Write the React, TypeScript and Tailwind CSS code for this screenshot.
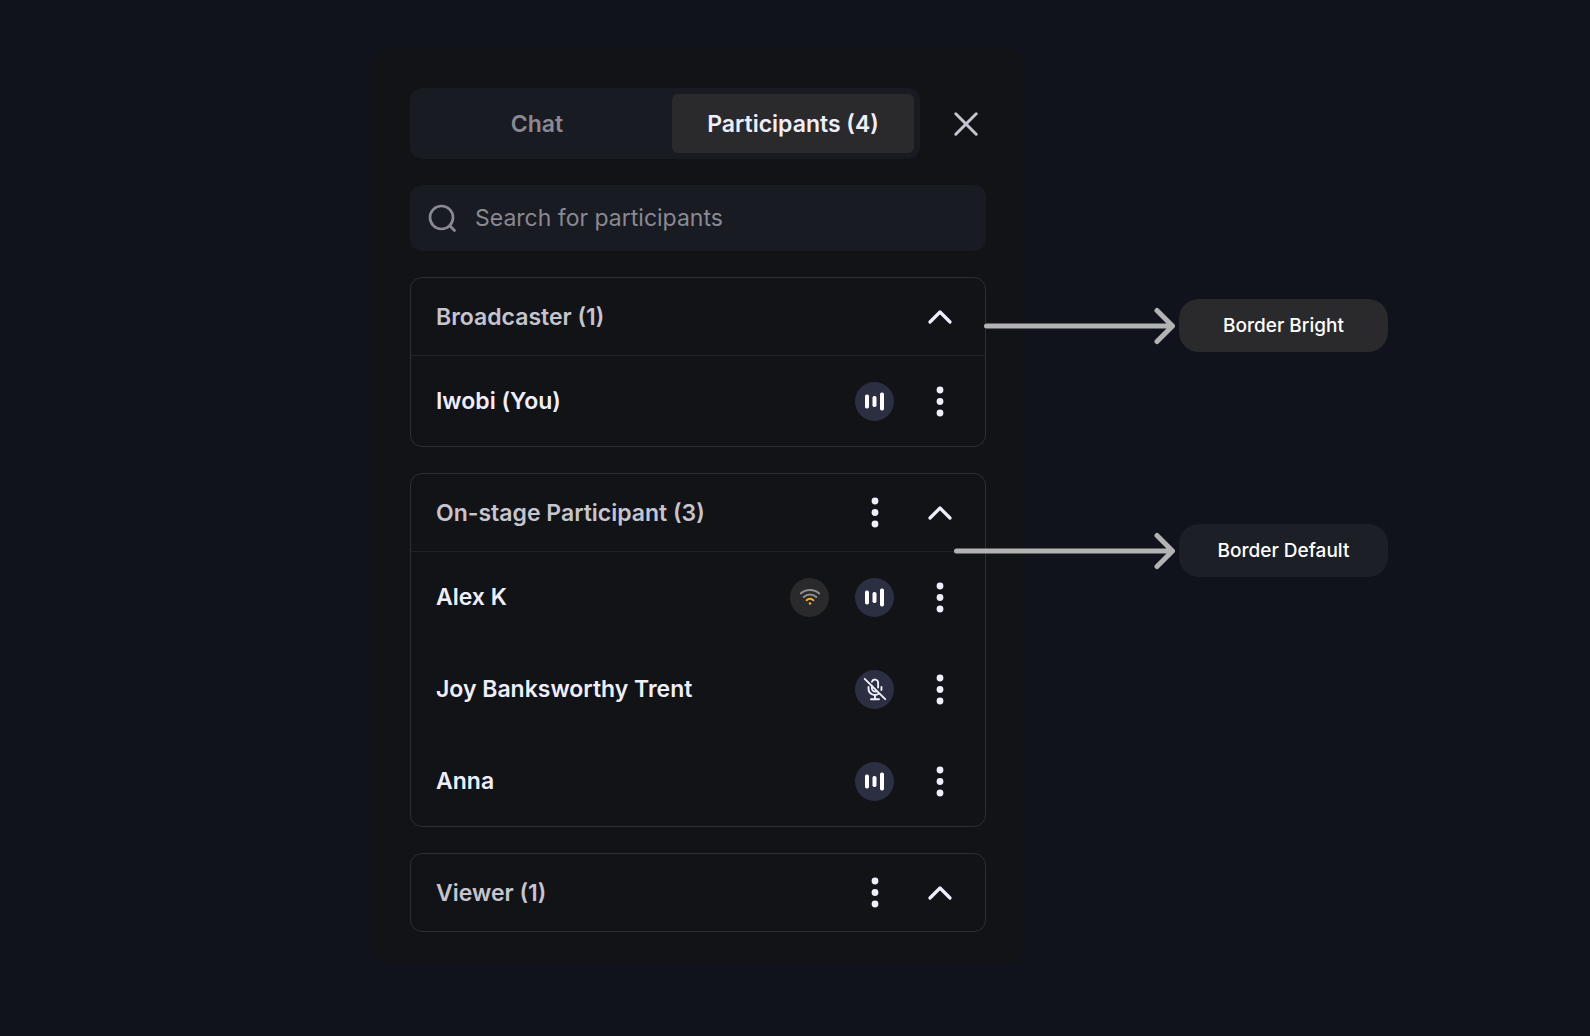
import { useState, type ReactNode } from "react";

type Status = "speaking" | "muted" | "weak-network";

function Chevron() {
  return (
    <svg width="24" height="24" viewBox="0 0 24 24" fill="none" stroke="#efeefc" strokeWidth="3.2" strokeLinecap="round" strokeLinejoin="round" aria-hidden="true">
      <path d="M2 17 12 7l10 10" />
    </svg>
  );
}

function Dots() {
  return (
    <svg width="8" height="31" viewBox="0 0 8 31" fill="#efeefc" aria-hidden="true">
      <circle cx="4" cy="4" r="3.4" />
      <circle cx="4" cy="15.5" r="3.4" />
      <circle cx="4" cy="27" r="3.4" />
    </svg>
  );
}

function StatusIcon({ status }: { status: Status }) {
  if (status === "weak-network") {
    return (
      <span role="img" aria-label="Weak network" className="grid size-[39px] place-items-center rounded-full bg-[#2a2a2d]">
        <svg width="24" height="24" viewBox="0 0 24 24" fill="none" strokeWidth="2" strokeLinecap="round">
          <path d="M2.8 8.4C8 3.8 16 3.8 21.2 8.4" stroke="#8f8f95" />
          <path d="M5.7 12C9.4 8.7 14.6 8.7 18.3 12" stroke="#8f8f95" />
          <path d="M8.6 15.2C10.6 13.5 13.4 13.5 15.4 15.2" stroke="#f8ae2b" />
          <circle cx="12" cy="18.5" r="1.2" fill="#f8ae2b" />
        </svg>
      </span>
    );
  }
  if (status === "muted") {
    return (
      <span role="img" aria-label="Muted" className="grid size-[39px] place-items-center rounded-full bg-[#2b2f41]">
        <svg width="24" height="24" viewBox="0 0 24 24" fill="none" stroke="#efeefc" strokeWidth="1.9" strokeLinecap="round" strokeLinejoin="round">
          <path d="M1.7 1.8 22.2 22.2" />
          <path d="M8.9 4.7A3.2 3.2 0 0 1 15.1 5.5V10.6" />
          <path d="M8.9 9V11.5A3.2 3.2 0 0 0 13.2 14.3" />
          <path d="M5.5 10V11.5A6.5 6.5 0 0 0 15.7 16.8" />
          <path d="M18.5 10V11.5L18.3 13" />
          <path d="M12 18.2V22M8 22.2H16" />
        </svg>
      </span>
    );
  }
  return (
    <span role="img" aria-label="Speaking" className="grid size-[39px] place-items-center rounded-full bg-[#2b2f41]">
      <svg width="19" height="19" viewBox="0 0 19 19" fill="#fff">
        <rect x="0" y="2.5" width="4" height="14" rx="1.7" />
        <rect x="7.5" y="4" width="4" height="11" rx="1.7" />
        <rect x="15" y="0.5" width="4" height="18" rx="1.7" />
      </svg>
    </span>
  );
}

function IconButton({ label, onClick, children }: { label: string; onClick?: () => void; children: ReactNode }) {
  return (
    <button type="button" aria-label={label} onClick={onClick} className="grid size-[39px] place-items-center">
      {children}
    </button>
  );
}

function Person({ name, statuses }: { name: string; statuses: Status[] }) {
  return (
    <li className="flex h-[90px] items-center gap-[26px] pr-[26px] pl-[25px]">
      <span className="flex-1 text-[#efeefc]">{name}</span>
      {statuses.map((s) => (
        <StatusIcon key={s} status={s} />
      ))}
      <IconButton label={`Options for ${name}`}>
        <Dots />
      </IconButton>
    </li>
  );
}

function Group({ title, menu, callout, children }: { title: string; menu?: boolean; callout?: ReactNode; children?: ReactNode }) {
  const [open, setOpen] = useState(true);
  return (
    <section className="relative rounded-xl border border-[#2f2f33]">
      <header className="flex h-[77px] items-center gap-[26px] pr-[26px] pl-[25px]">
        <h2 className="flex-1 text-[#c5c4cf]">{title}</h2>
        {menu && (
          <IconButton label={`Options for ${title}`}>
            <Dots />
          </IconButton>
        )}
        <IconButton label={`Toggle ${title}`} onClick={() => setOpen(!open)}>
          <Chevron />
        </IconButton>
      </header>
      {open && children && <ul className="flex flex-col gap-[2px] border-t border-[#202127]">{children}</ul>}
      {callout}
    </section>
  );
}

function Arrow({ length }: { length: number }) {
  return (
    <svg width={length} height="40" fill="none" stroke="#b3b3b3" strokeWidth="5" strokeLinecap="round" strokeLinejoin="round" className="shrink-0" aria-hidden="true">
      <path d={`M2.5 20H${length - 3}M${length - 18} 4.5 ${length - 2.5} 20 ${length - 18} 35.5`} />
    </svg>
  );
}

function Callout({ className, length, pill, children }: { className: string; length: number; pill: string; children: ReactNode }) {
  return (
    <div className={`absolute flex items-center gap-1 ${className}`}>
      <Arrow length={length} />
      <p className={`grid h-[53px] w-[209px] place-items-center rounded-[20px] text-[19px] font-medium text-white ${pill}`}>{children}</p>
    </div>
  );
}

export default function App() {
  const [tab, setTab] = useState("participants");
  const idle = "text-[#8a8994]";
  const active = "bg-[#2a2a2d] text-[#efeefc]";
  return (
    <main className="flex min-h-screen items-start justify-center bg-[#10131b] pt-12 pr-[194px] pb-16 font-['Inter',sans-serif] text-[23px] leading-8 font-semibold">
      <div className="flex w-full max-w-[654px] flex-col gap-[26px] rounded-[20px] bg-[#121317] px-[39px] pt-10 pb-8">
        <div className="flex items-center justify-between pr-px">
          <div role="tablist" className="grid w-[510px] grid-cols-2 gap-[14px] rounded-xl bg-[#191b22] p-[6px]">
            <button type="button" role="tab" aria-selected={tab === "chat"} onClick={() => setTab("chat")} className={`h-[59px] rounded-md ${tab === "chat" ? active : idle}`}>
              Chat
            </button>
            <button type="button" role="tab" aria-selected={tab === "participants"} onClick={() => setTab("participants")} className={`h-[59px] rounded-md ${tab === "participants" ? active : idle}`}>
              Participants (4)
            </button>
          </div>
          <IconButton label="Close">
            <svg width="24" height="24" viewBox="0 0 24 24" fill="none" stroke="#c5c4cf" strokeWidth="3" strokeLinecap="round" aria-hidden="true">
              <path d="M1.8 1.8 22.2 22.2M22.2 1.8 1.8 22.2" />
            </svg>
          </IconButton>
        </div>
        <label className="flex h-[66px] items-center gap-[18px] rounded-xl bg-[#191b22] px-[18px]">
          <svg width="29" height="29" viewBox="0 0 29 29" fill="none" stroke="#8a8994" strokeWidth="2.7" strokeLinecap="round" aria-hidden="true">
            <circle cx="13.5" cy="13.5" r="11.5" />
            <path d="M21.8 21.8 26.5 26.5" />
          </svg>
          <input type="text" aria-label="Search for participants" placeholder="Search for participants" className="min-w-0 flex-1 bg-transparent font-normal text-[#efeefc] outline-none placeholder:text-[#8a8994]" />
        </label>
        <Group
          title="Broadcaster (1)"
          callout={
            <Callout className="top-[21px] left-[573px]" length={191} pill="bg-[#2a2a2d]">
              Border Bright
            </Callout>
          }
        >
          <Person name="Iwobi (You)" statuses={["speaking"]} />
        </Group>
        <Group
          title="On-stage Participant (3)"
          menu
          callout={
            <Callout className="top-[50px] left-[543px]" length={221} pill="bg-[#1d1f27]">
              Border Default
            </Callout>
          }
        >
          <Person name="Alex K" statuses={["weak-network", "speaking"]} />
          <Person name="Joy Banksworthy Trent" statuses={["muted"]} />
          <Person name="Anna" statuses={["speaking"]} />
        </Group>
        <Group title="Viewer (1)" menu />
      </div>
    </main>
  );
}
